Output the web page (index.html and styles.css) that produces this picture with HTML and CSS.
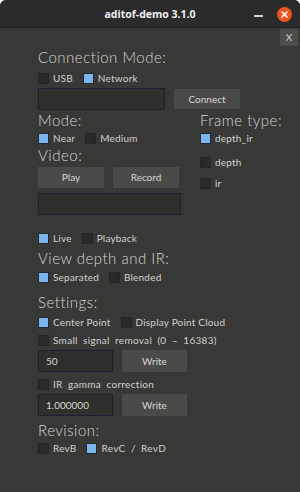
FILE: index.html
```html
<!DOCTYPE html>
<html lang="en">
<head>
    <meta charset="UTF-8">
    <title>aditof-demo 3.1.0</title>
    <link rel="stylesheet" href="styles.css">
</head>
<body>
    <div class="window">
        <div class="titlebar">
            <span class="title">aditof-demo 3.1.0</span>
            <span class="minimize"></span>
            <span class="close">
                <svg width="15" height="15" viewBox="0 0 15 15">
                    <path d="M5 5 L10 10 M10 5 L5 10" stroke="#fff" stroke-width="1.6" stroke-linecap="round"/>
                </svg>
            </span>
        </div>

        <div class="content">
            <div class="close-x">X</div>

            <!-- Connection -->
            <h2 class="heading">Connection Mode:</h2>
            <div class="checks mt7">
                <label class="check"><span class="box"></span>USB</label>
                <label class="check"><span class="box on"></span>Network</label>
            </div>
            <div class="field-row mt4">
                <div class="input ip"></div>
                <div class="btn connect">Connect</div>
            </div>

            <!-- Mode / frame type -->
            <div class="columns mt1">
                <div class="col-left">
                    <h2 class="heading">Mode:</h2>
                    <div class="checks mt4">
                        <label class="check"><span class="box on"></span>Near</label>
                        <label class="check"><span class="box"></span>Medium</label>
                    </div>
                    <h2 class="heading mt2">Video:</h2>
                    <div class="field-row mt3">
                        <div class="btn video">Play</div>
                        <div class="btn video">Record</div>
                    </div>
                    <div class="input file mt5"></div>
                </div>
                <div class="col-right">
                    <h2 class="heading">Frame type:</h2>
                    <label class="check mt4"><span class="box on"></span>depth_ir</label>
                    <label class="check mt13"><span class="box"></span>depth</label>
                    <label class="check mt10"><span class="box"></span>ir</label>
                </div>
            </div>

            <div class="checks mt18">
                <label class="check"><span class="box on"></span>Live</label>
                <label class="check"><span class="box"></span>Playback</label>
            </div>

            <h2 class="heading mt5">View depth and IR:</h2>
            <div class="checks mt5">
                <label class="check"><span class="box on"></span>Separated</label>
                <label class="check"><span class="box"></span>Blended</label>
            </div>

            <!-- Settings -->
            <h2 class="heading mt10">Settings:</h2>
            <div class="checks mt6">
                <label class="check"><span class="box on"></span>Center Point</label>
                <label class="check"><span class="box"></span>Display Point Cloud</label>
            </div>
            <label class="check wide mt7"><span class="box"></span>Small signal removal (0 – 16383)</label>
            <div class="field-row mt4">
                <div class="input value">50</div>
                <div class="btn write">Write</div>
            </div>
            <label class="check wide mt7"><span class="box"></span>IR gamma correction</label>
            <div class="field-row mt4">
                <div class="input value">1.000000</div>
                <div class="btn write">Write</div>
            </div>

            <h2 class="heading mt5">Revision:</h2>
            <div class="checks mt4">
                <label class="check"><span class="box"></span>RevB</label>
                <label class="check wide"><span class="box on"></span>RevC / RevD</label>
            </div>
        </div>
    </div>
</body>
</html>
```

FILE: styles.css
```css
* {
    margin: 0;
    padding: 0;
    box-sizing: border-box;
}

body {
    background: #fff;
    font-family: Lato, "Noto Sans", sans-serif;
    color: #d4d4d2;
}

.window {
    width: 300px;
    height: 492px;
    background: #383836;
    border-radius: 6px 6px 0 0;
    overflow: hidden;
}

.titlebar {
    position: relative;
    height: 28px;
    background: #2b2b2b;
    border-bottom: 1px solid #232323;
    display: flex;
    align-items: center;
    justify-content: center;
}

.title {
    font-family: "Open Sans", sans-serif;
    font-weight: 700;
    font-size: 10.5px;
    color: #f0f0f0;
}

.minimize {
    position: absolute;
    left: 254px;
    top: 15px;
    width: 9px;
    height: 1.5px;
    background: #d6d6d6;
}

.close {
    position: absolute;
    left: 277px;
    top: 7px;
    width: 15px;
    height: 15px;
    border-radius: 50%;
    background: #e9541f;
}

.close svg {
    display: block;
}

.content {
    position: relative;
    padding: 20px 0 0 38px;
}

.close-x {
    position: absolute;
    top: 1px;
    right: 2px;
    width: 18px;
    height: 17px;
    background: #4c4c4a;
    color: #d8d8d8;
    font-size: 10px;
    line-height: 17px;
    text-align: center;
}

.heading {
    font-size: 15px;
    line-height: 18px;
    font-weight: 300;
    letter-spacing: 0.5px;
    color: #d6d6d4;
}

.checks {
    display: flex;
    gap: 10px;
}

.check {
    display: flex;
    align-items: center;
    gap: 4px;
    height: 11px;
    font-size: 10px;
    line-height: 11px;
    letter-spacing: 0.2px;
    color: #d2d2d0;
}

/* labels with the wider spaced words */
.check.wide {
    word-spacing: 2.5px;
    letter-spacing: 0.3px;
}

.box {
    width: 11px;
    height: 11px;
    flex: none;
    background: #2a2a28;
    border: 1px solid #242422;
}

.box.on {
    background: #7ab6ee;
    border: 1.5px solid #26262c;
}

.field-row {
    display: flex;
    align-items: center;
    gap: 9px;
}

.input {
    height: 22px;
    background: #2f2f2d;
    border: 1px solid #1d1d33;
    font-size: 10px;
    line-height: 20px;
    padding-left: 7px;
    color: #d6d6d4;
}

.btn {
    background: #4a4a48;
    color: #d6d6d4;
    font-size: 10px;
    text-align: center;
}

.ip {
    width: 127px;
}

.connect {
    width: 66px;
    height: 20px;
    line-height: 20px;
}

.columns {
    display: flex;
}

.col-left {
    width: 162px;
}

.video {
    width: 66px;
    height: 21px;
    line-height: 21px;
}

.file {
    width: 143px;
}

.value {
    width: 75px;
}

.write {
    width: 65px;
    height: 22px;
    line-height: 22px;
}

.mt1 { margin-top: 1px; }
.mt2 { margin-top: 2px; }
.mt3 { margin-top: 3px; }
.mt4 { margin-top: 4px; }
.mt5 { margin-top: 5px; }
.mt6 { margin-top: 6px; }
.mt7 { margin-top: 7px; }
.mt10 { margin-top: 10px; }
.mt13 { margin-top: 13px; }
.mt18 { margin-top: 18px; }
```
